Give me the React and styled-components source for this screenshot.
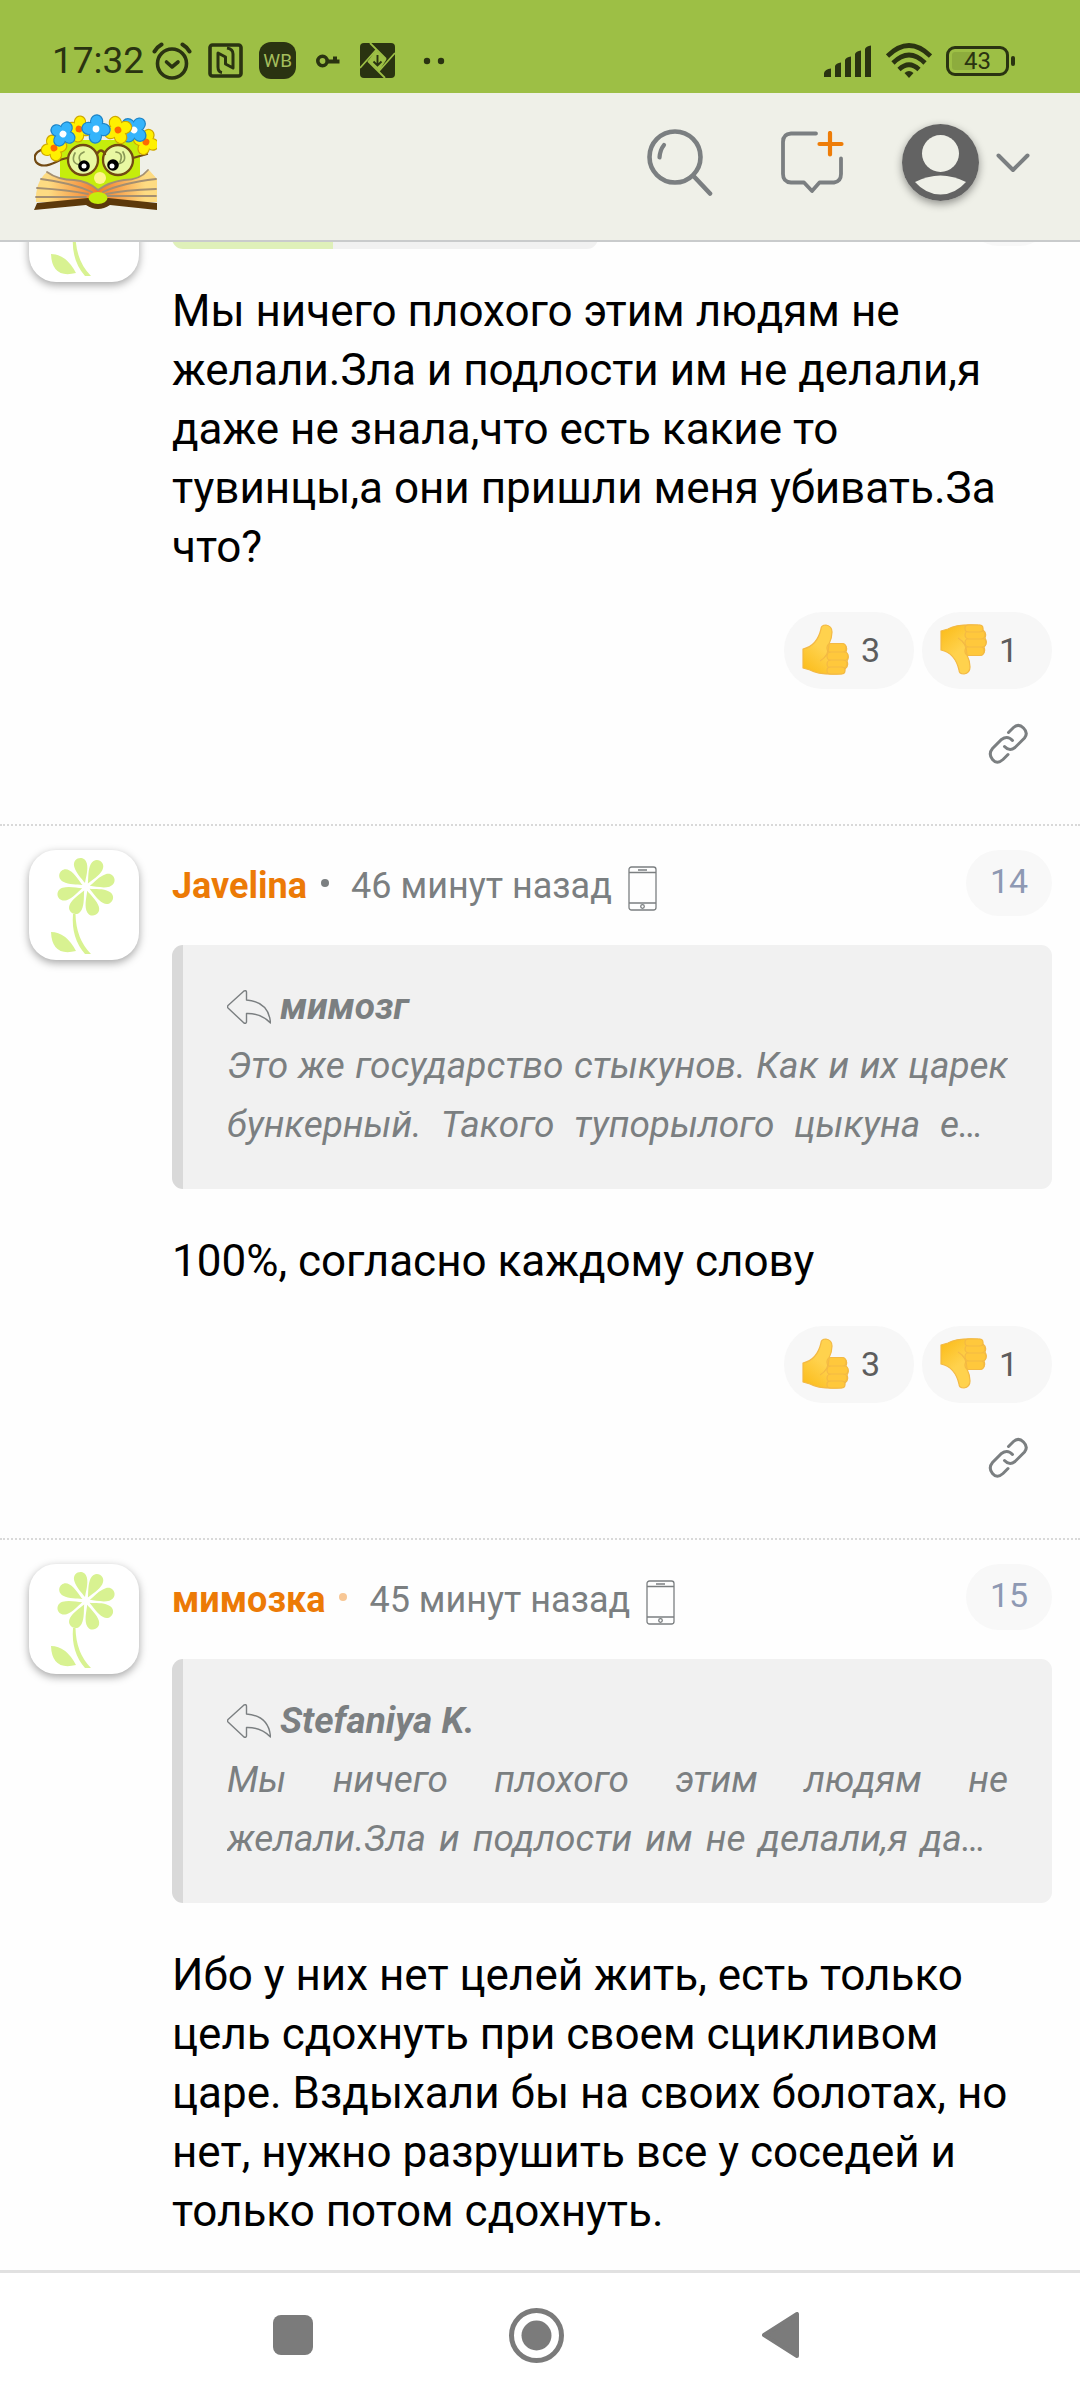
import React from 'react';
import styled, { createGlobalStyle } from 'styled-components';

const ink = '#2a3311';
const grey = '#7b7f81';

const GlobalStyle = createGlobalStyle`
  * { box-sizing: border-box; }
  body { margin: 0; background: #fff; font-family: Roboto, "Noto Sans", sans-serif; color: #000; }
  p { margin: 0; }
  svg { display: block; flex: none; }
`;

const Screen = styled.div`
  display: flex;
  flex-direction: column;
  height: 100vh;
  overflow: hidden;
  background: #fefefe;
`;

const StatusBar = styled.div`
  display: flex;
  flex: none;
  justify-content: space-between;
  align-items: center;
  height: 93px;
  padding: 28px 65px 0 52px;
  background: #9dbf45;
  color: ${ink};
`;

const StatusGroup = styled.div`
  display: flex;
  align-items: center;
  gap: ${(p) => p.$gap}px;
`;

const Clock = styled.time`
  font-size: 37px;
  line-height: 40px;
  margin-right: -8px;
`;

const AppBadge = styled.span`
  display: flex;
  align-items: center;
  justify-content: center;
  width: 37px;
  height: 37px;
  border-radius: 12px;
  background: ${ink};
  color: #a4be5c;
  font-size: 19px;
`;

const Battery = styled.span`
  display: flex;
  align-items: center;
  gap: 2px;
  &::after {
    content: '';
    width: 4px;
    height: 10px;
    border-radius: 2px;
    background: ${ink};
  }
`;

const BatteryBody = styled.span`
  width: 63px;
  height: 30px;
  border: 3px solid ${ink};
  border-radius: 9px;
  padding: 3px;
  text-align: center;
  font-size: 24px;
  line-height: 18px;
  background: linear-gradient(90deg, #8dac3d 43%, transparent 43%) content-box;
`;

const Header = styled.header`
  display: flex;
  flex: none;
  align-items: center;
  justify-content: space-between;
  height: 149px;
  padding: 0 50px 8px 34px;
  background: #eff0e8;
  border-bottom: 2px solid #c9cbcc;
`;

const HomeLink = styled.a`
  display: block;
`;

const HeaderActions = styled.nav`
  display: flex;
  align-items: center;
`;

const IconButton = styled.button`
  display: flex;
  align-items: center;
  justify-content: center;
  padding: 0;
  border: 0;
  background: none;
  color: ${grey};
  cursor: pointer;
`;

const HeaderButton = styled(IconButton)`
  margin-right: ${(p) => p.$after}px;
`;

const ProfileButton = styled(IconButton)`
  gap: 17px;
`;

const ProfilePicture = styled.span`
  border-radius: 50%;
  box-shadow: 0 3px 8px rgba(0, 0, 0, 0.4);
`;

const Main = styled.main`
  flex: 1;
  min-height: 0;
  overflow: hidden;
`;

const Feed = styled.div`
  margin-top: -96px;
`;

const Comment = styled.article`
  display: flex;
  align-items: flex-start;
  gap: 33px;
  padding: 24px 28px 60px 29px;
  border-top: 2px dotted #d9d9d9;
`;

const Avatar = styled.a`
  display: block;
  flex: none;
  width: 110px;
  height: 110px;
  border-radius: 27px;
  background: #fff;
  box-shadow: 0 3px 8px rgba(0, 0, 0, 0.35);
`;

const Content = styled.div`
  flex: 1;
  min-width: 0;
`;

const RankRow = styled.div`
  display: flex;
  align-items: flex-end;
  justify-content: space-between;
  height: 77px;
  margin-bottom: 33px;
`;

const RankBar = styled.div`
  width: 426px;
  height: 24px;
  border-radius: 11px;
  background: linear-gradient(90deg, #dff0b9 161px, #f1f1f1 161px);
`;

const RankNumber = styled.span`
  width: 86px;
  height: 66px;
  margin-bottom: 3px;
  border-radius: 33px;
  background: #f8f8f8;
`;

const Head = styled.header`
  display: flex;
  align-items: flex-start;
  justify-content: space-between;
  height: 95px;
`;

const Meta = styled.div`
  display: flex;
  align-items: center;
  padding-top: 10px;
  font-size: 36px;
  line-height: 42px;
  color: ${grey};
`;

const Author = styled.a`
  color: #ec7a06;
  font-weight: 700;
  text-decoration: none;
`;

const Dot = styled.span`
  width: 8px;
  height: 8px;
  margin: 0 22px 6px 14px;
  border-radius: 50%;
  background: ${(p) => (p.$online ? '#f8c795' : grey)};
`;

const When = styled.time`
  margin-right: 16px;
`;

const Device = styled.span`
  padding-top: 6px;
`;

const Number = styled.a`
  width: 86px;
  height: 66px;
  border-radius: 33px;
  background: #f8f8f8;
  color: #8e99b3;
  font-size: 34px;
  line-height: 63px;
  text-align: center;
  text-decoration: none;
`;

const Quote = styled.blockquote`
  margin: 0 0 43px;
  padding: 32px 44px 35px;
  border-left: 11px solid #d9d9d9;
  border-radius: 11px;
  background: #f1f1f1;
  color: ${grey};
  font-size: 37px;
  line-height: 59px;
  font-style: italic;
`;

const QuoteAuthor = styled.cite`
  display: flex;
  align-items: center;
  gap: 9px;
  font-weight: 700;
`;

const QuoteText = styled.p`
  display: -webkit-box;
  -webkit-box-orient: vertical;
  -webkit-line-clamp: 2;
  overflow: hidden;
  text-align: justify;
`;

const Body = styled.p`
  font-size: 44px;
  line-height: 59px;
`;

const Reactions = styled.div`
  display: flex;
  justify-content: flex-end;
  gap: 8px;
  margin-top: 35px;
`;

const Reaction = styled.button`
  display: flex;
  align-items: center;
  gap: 12px;
  width: 130px;
  height: 77px;
  padding: 0 0 2px 18px;
  border: 0;
  border-radius: 38px;
  background: #f7f7f7;
  color: #5d5d5d;
  font: 400 34px/40px Roboto, sans-serif;
  cursor: pointer;
`;

const ShareRow = styled.div`
  display: flex;
  justify-content: flex-end;
  padding: 34px 23px 0;
`;

const SystemNav = styled.nav`
  display: grid;
  flex: none;
  grid-template-columns: repeat(3, 244px);
  justify-content: center;
  height: 130px;
  padding: 0 7px 3px 0;
  border-top: 3px solid #e1e1e1;
  background: #fff;
`;

const AlarmIcon = () => (
  <svg width="40" height="38" viewBox="0 0 40 38" fill="none" stroke={ink} strokeLinecap="round" strokeLinejoin="round">
    <circle cx="20" cy="21.500" r="14.500" strokeWidth="3.600" />
    <path d="M2.500 9.500Q5 5 9.500 2.500M37.500 9.500Q35 5 30.500 2.500" strokeWidth="4" />
    <path d="M14.500 20l5.500 5 6-5" strokeWidth="3.600" />
  </svg>
);

const NfcIcon = () => (
  <svg width="35" height="35" viewBox="0 0 35 35" fill="none" stroke={ink} strokeLinejoin="round">
    <rect x="2" y="2" width="31" height="31" rx="2.500" strokeWidth="3.600" />
    <path d="M14 29.500Q10 29 10 24V10L17.500 14V21L25 25V11Q25 6 19 5" strokeWidth="3" />
  </svg>
);

const KeyIcon = () => (
  <svg width="32" height="14" viewBox="-4 0 32 14" fill="none" stroke={ink}>
    <circle cx="6.500" cy="7" r="4.700" strokeWidth="3.600" />
    <path d="M11 7.500h12.500M19 7V2.500" strokeWidth="4" />
  </svg>
);

const ShutterIcon = () => (
  <svg width="35" height="35" viewBox="0 0 35 35" fill="none">
    <rect width="35" height="35" rx="4" fill={ink} />
    <path d="M10 0L26 16M35 10L19 28M25 35L8 18M0 25L16 7" stroke="#9dbf45" strokeWidth="1.800" />
    <path d="M16 7L26.500 16.500 19 28 8 18z" fill="#9dbf45" />
    <path d="M17.500 12v10M13.500 18.500l4 4 4-4" stroke={ink} strokeWidth="1.900" />
  </svg>
);

const MoreDots = () => (
  <svg width="34" height="8" viewBox="-12 0 34 8" fill={ink}>
    <circle cx="4" cy="4" r="3.200" />
    <circle cx="18" cy="4" r="3.200" />
  </svg>
);

const SignalIcon = () => (
  <svg width="48" height="32" viewBox="0 0 48 32" fill={ink}>
    <path d="M0 32v-4q1-4 7-4.500V32zM11 32V21q1-3 6-3.500V32zM21 32V15q1-3 6-3.500V32zM31 32V9q1-3 6-3.500V32zM41 32V4q1-3 6-3.500V32z" />
  </svg>
);

const WifiIcon = () => (
  <svg width="46" height="35" viewBox="0 0 46 35" fill="none" stroke={ink} strokeWidth="4.600">
    <path d="M1.500 13Q23-8 44.500 13" />
    <path d="M7 20Q23 4 39 20" />
    <path d="M13 26.500Q23 17 33 26.500" />
    <path d="M18.500 30q4.500-4 9 0L23 35z" fill={ink} stroke="none" />
  </svg>
);

const SearchIcon = () => (
  <svg width="66" height="67" viewBox="0 0 66 67" fill="none" stroke={grey} strokeLinecap="round">
    <circle cx="28" cy="28" r="25.500" strokeWidth="4.600" />
    <path d="M46.500 47L63 64.500" strokeWidth="4.600" />
    <path d="M17 16q-4 5-4.500 12.500" strokeWidth="4.200" />
  </svg>
);

const NewTopicIcon = () => (
  <svg width="63" height="63" viewBox="0 0 63 63" fill="none" strokeLinecap="round" strokeLinejoin="round">
    <path d="M35 2.500H10Q2 3 2 11V43q0 8 8 8.500H23l8 8.500 7.500-8.500H53q7-1 7-8.500V27.500" stroke={grey} strokeWidth="3.800" />
    <path d="M49 2v21.500M38.500 13h22" stroke="#ee7d08" strokeWidth="4.200" />
  </svg>
);

const PersonIcon = () => (
  <svg width="77" height="77" viewBox="0 0 77 77">
    <circle cx="38.500" cy="38.500" r="38.500" fill="#636363" />
    <circle cx="38.500" cy="29.500" r="18.500" fill="#eff0e8" />
    <path d="M13 58Q38.500 45 64 58 53 70.500 38.500 70.500T13 58z" fill="#eff0e8" />
  </svg>
);

const ChevronIcon = () => (
  <svg width="34" height="20" viewBox="0 0 34 20" fill="none" stroke={grey} strokeWidth="4" strokeLinecap="round" strokeLinejoin="round">
    <path d="M2.500 2.500L17 17 31.500 2.500" />
  </svg>
);

const yellow = { fill: '#fff000', edge: '#d0a900', core: '#ff6a00' };
const blue = { fill: '#35b4fb', edge: '#1f86c8', core: '#fff' };

const blossoms = [
  { x: 20, y: 34, r: 12, turn: -15, ...yellow },
  { x: 45, y: 15, r: 12, turn: 8, ...yellow },
  { x: 29, y: 20, r: 12, turn: 30, ...blue },
  { x: 112, y: 28, r: 12, turn: 20, ...yellow },
  { x: 100, y: 16, r: 13, turn: 42, ...blue },
  { x: 84, y: 16, r: 13, turn: -20, ...yellow },
  { x: 62, y: 15, r: 13, turn: 5, ...blue },
];

const Blossom = ({ x, y, r, fill, edge, core, turn }) => (
  <g transform={`translate(${x} ${y}) rotate(${turn})`}>
    {[0, 90, 180, 270].map((a) => (
      <ellipse key={a} cx="0" cy={-r * 0.58} rx={r * 0.46} ry={r * 0.5} transform={`rotate(${a})`} fill={fill} stroke={edge} strokeWidth="1.400" />
    ))}
    {[0, 90, 180, 270].map((a) => (
      <ellipse key={a} cx="0" cy={-r * 0.54} rx={r * 0.42} ry={r * 0.48} transform={`rotate(${a})`} fill={fill} />
    ))}
    <circle r="3.400" fill={core} />
  </g>
);

const Logo = () => (
  <svg width="123" height="98" viewBox="0 0 123 98" fill="none" strokeLinecap="round">
    <defs>
      <linearGradient id="page-left" x1="0" x2="1"><stop offset=".2" stopColor="#fddb82" /><stop offset="1" stopColor="#f47a28" /></linearGradient>
      <linearGradient id="page-right" x1="1" x2="0"><stop offset=".2" stopColor="#fddb82" /><stop offset="1" stopColor="#f47a28" /></linearGradient>
    </defs>
    <path d="M26 26H106V66L64 84 26 64z" fill="#c5ed0c" />
    <path d="M7 36Q-2 40 2 48q6 7 20 0 5-3 11-4M99 44l14-4" stroke="#724a12" strokeWidth="2.200" />
    <path d="M13 58Q24 66 40 66 54 67 64 76V88H2Q1 68 13 58z" fill="url(#page-left)" />
    <path d="M115 56Q106 66 90 66 75 68 64 76V88H123V65z" fill="url(#page-right)" />
    <path d="M13 58Q24 66 40 66 54 67 64 76 75 68 90 66 106 66 114 56M7 65Q38 69 58 78M3 74Q35 76 54 80M2 83H52M122 65Q88 69 69 78M122 75Q90 76 72 80M122 82H72" stroke="#a48f71" strokeWidth="1.800" />
    <path d="M3 89L54 84H74L123 89V96L76 91Q64 99 52 91L0 96z" fill="#5c390b" />
    <ellipse cx="64" cy="84" rx="9.500" ry="6" fill="#c5ed0c" />
    <g stroke="#724a12" strokeWidth="2.300">
      <circle cx="49" cy="46" r="15" fill="#e8f8a2" />
      <circle cx="84" cy="46" r="15" fill="#e8f8a2" />
      <path d="M63 40q4-7 8 0" />
    </g>
    <path d="M41 39q-5 10 5 12M50 38q-7 3-4 9M82 38q8 1 4 10M89 38q5 10-5 12" stroke="#8b9a58" strokeWidth="1.700" />
    <circle cx="50" cy="52" r="5.800" fill="#000" />
    <circle cx="50" cy="52" r="2.500" fill="#fff" />
    <circle cx="79" cy="51" r="5.800" fill="#000" />
    <circle cx="78" cy="52" r="2.500" fill="#fff" />
    <circle cx="66" cy="64" r="6" fill="#fff48c" />
    {blossoms.map((b) => <Blossom key={b.x} {...b} />)}
  </svg>
);

const FlowerIcon = () => (
  <svg width="110" height="110" viewBox="0 0 110 110" fill="#d8f291">
    {[-14, 28, 73, 117, 163, 207, 252, 299].map((a) => (
      <path key={a} transform={`translate(57 37) rotate(${a})`} d="M0-4C-2-9-6.500-16-6.500-22.500-6.500-32 6.500-32 6.500-22.500 6.500-16 2-9 0-4z" />
    ))}
    <path d="M44 64h2.500Q47 89 62 104H56Q42 88 44 64zM22 82q15 0 25 19-24 6-25-19z" />
  </svg>
);

const PhoneIcon = () => (
  <svg width="29" height="45" viewBox="0 0 29 45" fill="none" stroke={grey} strokeWidth="1.300">
    <rect x="1" y="1" width="27" height="43" rx="2.500" />
    <path d="M1 6.500h27M1 37h27M10 4h9" />
    <circle cx="14.500" cy="40.500" r="1.800" />
  </svg>
);

const ReplyIcon = () => (
  <svg width="44" height="34" viewBox="0 0 44 34" fill="none" stroke={grey} strokeWidth="1.400" strokeLinejoin="round">
    <path d="M17 1L1 15.500q-1 1.500 0 2.500L17 33q2 1 2.500-1V23.500Q34 23 43.500 33 42 12 19.500 10V2Q19 0 17 1z" />
  </svg>
);

const LinkIcon = () => (
  <svg width="41" height="41" viewBox="0 0 41 41" fill="none" stroke={grey} strokeWidth="3" strokeLinecap="round">
    <path d="M20.500 9.500L25.500 4.500Q30.500 0 35.500 5T36.500 15L27 24.500Q21.500 29 16.500 23.500" />
    <path d="M24.500 17.500Q19.500 12 13.500 16.500L4.500 25.500Q0 31 4.500 36.500T15 36.500L20 31.500" />
  </svg>
);

const ThumbIcon = ({ down }) => {
  const id = down ? 'thumb-down' : 'thumb-up';
  return (
    <svg width="47" height="51" viewBox="0 0 47 51" fill="none" strokeLinejoin="round">
      <defs>
        <linearGradient id={id} x1=".7" y1=".2" x2=".1" y2="1"><stop offset=".4" stopColor="#ffd24d" /><stop offset="1" stopColor="#fbbc1a" /></linearGradient>
      </defs>
      <g transform={down ? 'translate(0 51) scale(1 -1)' : undefined} stroke="#f3b944" strokeWidth="1.200">
        <path d="M1 25Q15 22 19 5 19 1 24 1 30 2 30 8 30 14 27 20L42 20Q46 23 44 28 48 32 45 37 47 42 43 45 42 50 38 50 16 51 8 46L1 44z" fill={`url(#${id})`} />
        <g fill="#ffc83c">
          <rect x="25" y="19.500" width="19" height="9" rx="4" />
          <rect x="25" y="28" width="21" height="8.500" rx="4" />
          <rect x="25" y="36" width="20" height="8" rx="4" />
          <rect x="25" y="43" width="18" height="7" rx="3.500" />
        </g>
        <path d="M27 20Q27 32 18 37" />
      </g>
    </svg>
  );
};

const CommentHead = ({ author, online, when, number }) => (
  <Head>
    <Meta>
      <Author href="#author">{author}</Author>
      <Dot $online={online} />
      <When>{when}</When>
      <Device><PhoneIcon /></Device>
    </Meta>
    <Number href={`#comment-${number}`}>{number}</Number>
  </Head>
);

const CommentActions = () => (
  <>
    <Reactions>
      <Reaction type="button" aria-label="Нравится: 3"><ThumbIcon />3</Reaction>
      <Reaction type="button" aria-label="Не нравится: 1"><ThumbIcon down />1</Reaction>
    </Reactions>
    <ShareRow>
      <IconButton type="button" aria-label="Ссылка"><LinkIcon /></IconButton>
    </ShareRow>
  </>
);

const Quoted = ({ author, children }) => (
  <Quote>
    <QuoteAuthor><ReplyIcon />{author}</QuoteAuthor>
    <QuoteText>{children}</QuoteText>
  </Quote>
);

export default function App() {
  return (
    <Screen>
      <GlobalStyle />
      <StatusBar>
        <StatusGroup $gap={16}>
          <Clock>17:32</Clock>
          <AlarmIcon />
          <NfcIcon />
          <AppBadge>WB</AppBadge>
          <KeyIcon />
          <ShutterIcon />
          <MoreDots />
        </StatusGroup>
        <StatusGroup $gap={14}>
          <SignalIcon />
          <WifiIcon />
          <Battery><BatteryBody>43</BatteryBody></Battery>
        </StatusGroup>
      </StatusBar>
      <Header>
        <HomeLink href="#home" aria-label="Главная"><Logo /></HomeLink>
        <HeaderActions>
          <HeaderButton type="button" aria-label="Поиск" $after={68}><SearchIcon /></HeaderButton>
          <HeaderButton type="button" aria-label="Новая тема" $after={58}><NewTopicIcon /></HeaderButton>
          <ProfileButton type="button" aria-label="Профиль">
            <ProfilePicture><PersonIcon /></ProfilePicture>
            <ChevronIcon />
          </ProfileButton>
        </HeaderActions>
      </Header>
      <Main>
        <Feed>
          <Comment>
            <Avatar href="#author" aria-label="Stefaniya K."><FlowerIcon /></Avatar>
            <Content>
              <RankRow><RankBar /><RankNumber /></RankRow>
              <Body>Мы ничего плохого этим людям не желали.Зла и подлости им не делали,я даже не знала,что есть какие то тувинцы,а они пришли меня убивать.За что?</Body>
              <CommentActions />
            </Content>
          </Comment>
          <Comment>
            <Avatar href="#author" aria-label="Javelina"><FlowerIcon /></Avatar>
            <Content>
              <CommentHead author="Javelina" when="46 минут назад" number={14} />
              <Quoted author="мимозг">Это же государство стыкунов. Как и их царек бункерный. Такого тупорылого цыкуна еще поискать</Quoted>
              <Body>100%, согласно каждому слову</Body>
              <CommentActions />
            </Content>
          </Comment>
          <Comment>
            <Avatar href="#author" aria-label="мимозка"><FlowerIcon /></Avatar>
            <Content>
              <CommentHead author="мимозка" online when="45 минут назад" number={15} />
              <Quoted author="Stefaniya K.">Мы ничего плохого этим людям не желали.Зла и подлости им не делали,я даже не знала</Quoted>
              <Body>Ибо у них нет целей жить, есть только цель сдохнуть при своем сцикливом царе. Вздыхали бы на своих болотах, но нет, нужно разрушить все у соседей и только потом сдохнуть.</Body>
            </Content>
          </Comment>
        </Feed>
      </Main>
      <SystemNav>
        <IconButton type="button" aria-label="Недавние">
          <svg width="40" height="40" viewBox="0 0 40 40" fill="#7b7b7b"><rect width="40" height="40" rx="8" /></svg>
        </IconButton>
        <IconButton type="button" aria-label="Домой">
          <svg width="55" height="55" viewBox="0 0 55 55"><circle cx="27.500" cy="27.500" r="25" fill="none" stroke="#7b7b7b" strokeWidth="5" /><circle cx="27.500" cy="27.500" r="15" fill="#7b7b7b" /></svg>
        </IconButton>
        <IconButton type="button" aria-label="Назад">
          <svg width="38" height="46" viewBox="0 0 38 46" fill="#7b7b7b" stroke="#7b7b7b" strokeWidth="4" strokeLinejoin="round"><path d="M2 23L35 2V44z" /></svg>
        </IconButton>
      </SystemNav>
    </Screen>
  );
}
